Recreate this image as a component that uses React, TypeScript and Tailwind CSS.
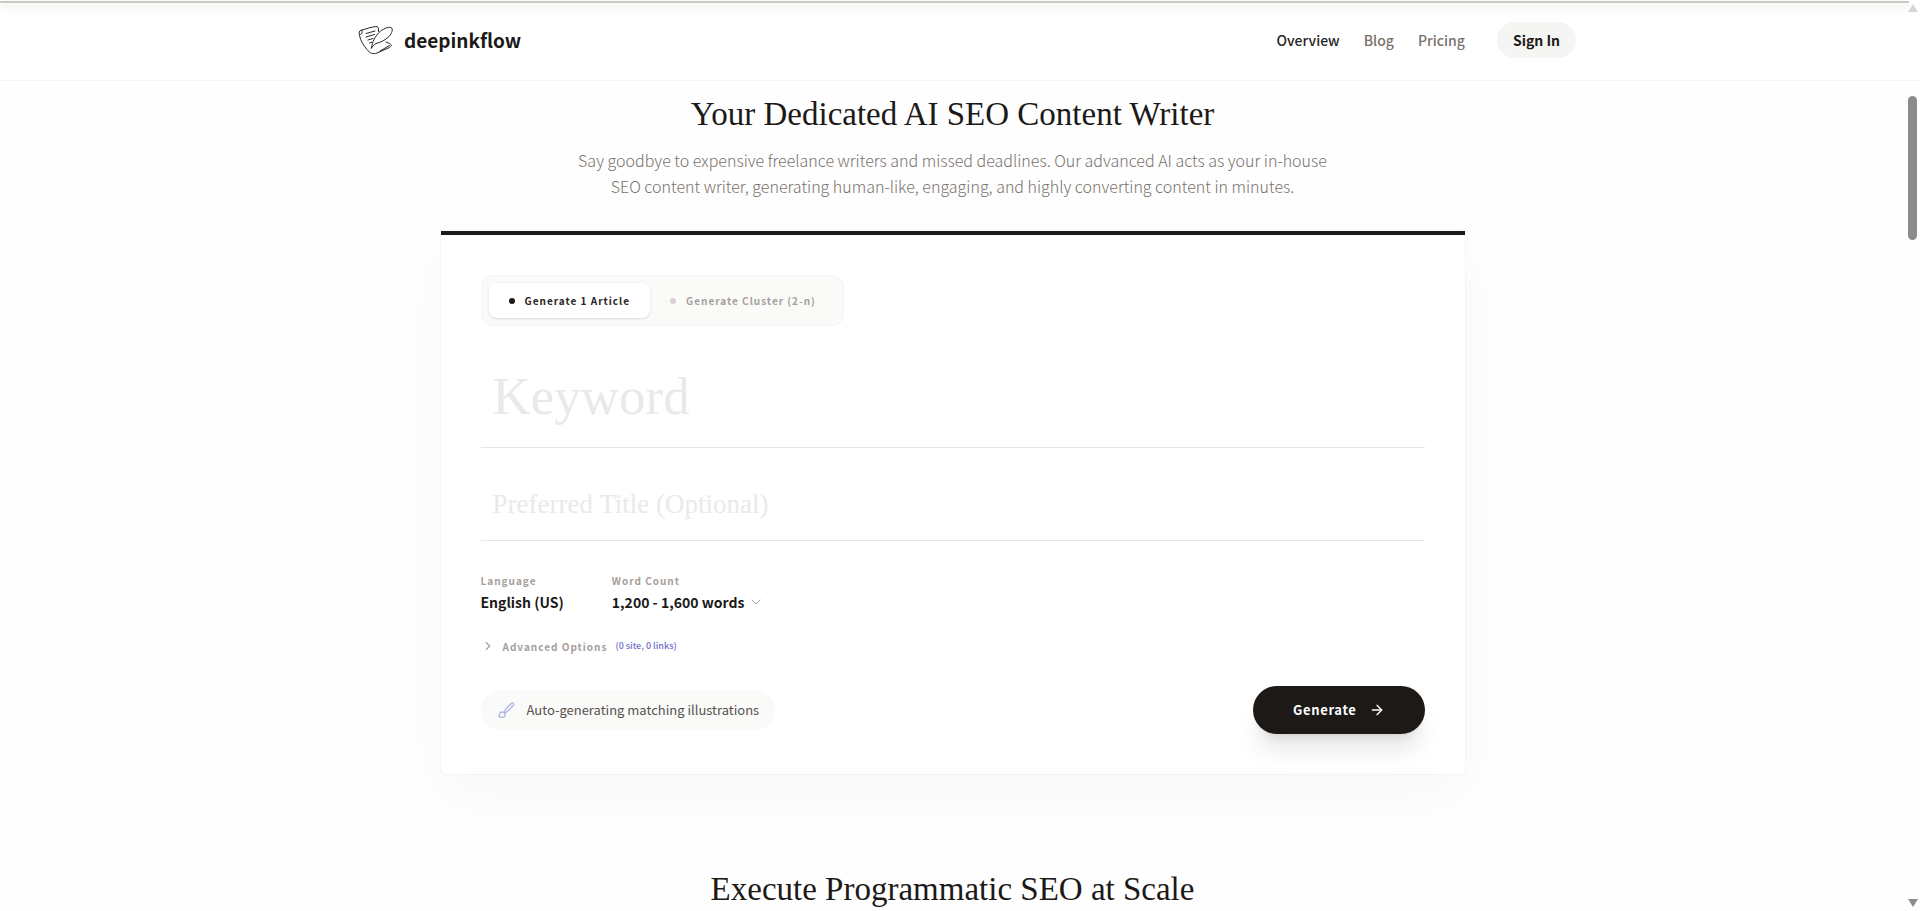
import { ArrowRight, ChevronDown, ChevronRight } from 'lucide-react';

const navLinks = [
  { label: 'Overview', className: 'text-stone-800' },
  { label: 'Blog', className: 'text-stone-500' },
  { label: 'Pricing', className: 'text-stone-500' },
];

function Logo() {
  return (
    <svg viewBox="0 0 36 30" className="h-[30px] w-9" fill="none" stroke="#292524" strokeWidth="1" strokeLinecap="round" strokeLinejoin="round">
      <path d="M20.500 6.500V4C20.500 1.500 18.500 1 15 2C11 2.500 7 4.500 3.500 5C1 5.500 0.800 8 1.500 10.500C2.500 15.500 5.500 20.500 9 24.500C12 28.500 15 29.500 19 28L31.500 22.500C34 21 33.500 19.500 31.500 18.500L28 17" />
      <path d="M1.500 9.500C3.500 10 4.500 8 4 5.500" />
      <path d="M8 8.500L17 6M8 12L16.500 9.500M10 15L15 13.500M11.500 18L14 17.200" />
      <path d="M13.500 23C14.500 16 17 12 21 7.500C24.500 4 30 1.500 33 2.500C35.500 4 34 8 31 11.500C27 15.500 22 17.500 18 18.500C16 19.500 15 21 13.500 23Z" />
      <path d="M22 26L31.500 20.500" />
    </svg>
  );
}

function PaintBrush() {
  return (
    <svg viewBox="0 0 24 24" className="size-[18px] text-[#b4b6ec]" fill="none" stroke="currentColor" strokeWidth="1.8" strokeLinecap="round" strokeLinejoin="round">
      <path d="M9.500 14.500C11 11.500 14.500 7 19 3.500C20 2.700 21.200 2.500 21.800 3.200C22.500 3.900 22.200 5 21.500 6C18 10.500 14 14 11 15.800" />
      <path d="M10.700 18.200C10.700 20.300 9.200 21.700 7 21.700C5 21.700 3.300 21.300 2 20.300C3.200 20.300 3.400 19.500 3.400 18.200C3.400 16.200 5 14.600 7 14.600C9.100 14.600 10.700 16.200 10.700 18.200Z" />
    </svg>
  );
}

function Header() {
  return (
    <header className="sticky top-0 z-10 border-b border-stone-100 bg-white">
      <div className="h-px bg-white" />
      <div className="mr-[11px] h-0.5 bg-[#cbcac2] shadow-[0_3px_10px_rgba(0,0,0,0.2)]" />
      <div className="mx-auto flex h-[77px] max-w-7xl items-center justify-between px-6 pb-[3px]">
        <a href="#" className="flex items-center gap-2.5 pl-[14px]">
          <Logo />
          <span className="text-[19px] font-bold text-stone-900">deepinkflow</span>
        </a>
        <nav className="flex items-center gap-6">
          {navLinks.map((link) => (
            <a key={link.label} href="#" className={`text-[14px] font-medium ${link.className}`}>
              {link.label}
            </a>
          ))}
          <button className="ml-2 h-9 rounded-full bg-stone-100 px-4 text-[14px] font-bold text-stone-900">Sign In</button>
        </nav>
      </div>
    </header>
  );
}

function ModeSwitch() {
  return (
    <div className="inline-flex rounded-xl border border-stone-100 bg-stone-50 p-[7px]">
      <button type="button" className="flex h-[35px] items-center gap-2.5 rounded-lg bg-white px-5 text-[10px] font-bold tracking-widest text-stone-800 shadow-sm">
        <span className="size-1.5 rounded-full bg-stone-900" />
        Generate 1 Article
      </button>
      <button type="button" className="flex h-[35px] items-center gap-2.5 px-5 text-[10px] font-bold tracking-widest text-stone-400">
        <span className="size-1.5 rounded-full bg-stone-300" />
        Generate Cluster (2-n)
      </button>
    </div>
  );
}

function GeneratorForm() {
  return (
    <form className="mx-auto max-w-5xl rounded-b border-t-4 border-stone-900 bg-white p-10 shadow-[0_20px_60px_rgba(0,0,0,0.03),0_0_2px_rgba(0,0,0,0.1)]">
      <ModeSwitch />
      <input
        aria-label="Keyword"
        placeholder="Keyword"
        className="mt-8 block h-[90px] w-full border-b border-stone-200 px-3 pb-3.5 font-['Liberation_Serif',serif] text-[53px] outline-none placeholder:text-[#ebe9e8]"
      />
      <input
        aria-label="Preferred title"
        placeholder="Preferred Title (Optional)"
        className="mt-5 block h-[73px] w-full border-b border-stone-200 px-3 font-['Liberation_Serif',serif] text-[27px] outline-none placeholder:text-[#ebe9e8]"
      />
      <div className="mt-8 flex gap-12">
        <div>
          <p className="text-[10px] leading-4 font-bold tracking-widest text-stone-400">Language</p>
          <p className="mt-px text-[14px] leading-6 font-bold text-stone-900">English (US)</p>
        </div>
        <div>
          <p className="text-[10px] leading-4 font-bold tracking-widest text-stone-400">Word Count</p>
          <button type="button" className="mt-px flex items-center gap-1 text-[14px] leading-6 font-bold text-stone-900">
            1,200 - 1,600 words
            <ChevronDown className="size-4 text-stone-400" strokeWidth={1.5} />
          </button>
        </div>
      </div>
      <button type="button" className="mt-5 flex h-6 items-center gap-2 text-[10px] font-bold tracking-widest text-stone-400">
        <ChevronRight className="size-3.5" />
        Advanced Options
        <span className="text-[9px] font-medium tracking-normal text-[#6f6fc9]">(0 site, 0 links)</span>
      </button>
      <div className="mt-7 flex items-center justify-between">
        <div className="flex h-10 items-center gap-3 rounded-full bg-stone-50 px-4 text-[13px] text-stone-600">
          <PaintBrush />
          Auto-generating matching illustrations
        </div>
        <button type="button" className="flex h-12 items-center gap-3 rounded-full bg-stone-900 px-10 text-[13px] font-bold tracking-wider text-white shadow-xl shadow-black/10">
          Generate
          <ArrowRight className="size-4" />
        </button>
      </div>
    </form>
  );
}

function Scrollbar() {
  return (
    <div aria-hidden className="fixed inset-y-0 right-0 z-20 flex w-[15px] flex-col items-center justify-between py-1">
      <svg viewBox="0 0 10 8" className="h-2 w-2.5" fill="#d6d6d6"><path d="M5 0l5 8H0z" /></svg>
      <span className="absolute top-24 h-36 w-[9px] rounded-full bg-[#8b8b8b]" />
      <svg viewBox="0 0 10 8" className="h-2 w-2.5" fill="#8b8b8b"><path d="M5 8L0 0h10z" /></svg>
    </div>
  );
}

export default function App() {
  return (
    <div className="h-screen overflow-hidden bg-[#fefefe] font-['Noto_Sans_CJK_SC',sans-serif]">
      <Header />
      <Scrollbar />
      <main className="pr-[15px]">
        <section className="pt-[13px]">
          <h2 className="text-center font-['Liberation_Serif',serif] text-[33px] leading-10 text-stone-900">
            Your Dedicated AI SEO Content Writer
          </h2>
          <p className="mx-auto mt-[13px] mb-8 max-w-3xl text-center text-[16px] leading-[26px] font-light text-stone-500">
            Say goodbye to expensive freelance writers and missed deadlines. Our advanced AI acts as your in-house SEO content
            writer, generating human-like, engaging, and highly converting content in minutes.
          </p>
          <GeneratorForm />
        </section>
        <section className="pt-[95px]">
          <h2 className="text-center font-['Liberation_Serif',serif] text-[33px] leading-10 text-stone-900">
            Execute Programmatic SEO at Scale
          </h2>
        </section>
      </main>
    </div>
  );
}
